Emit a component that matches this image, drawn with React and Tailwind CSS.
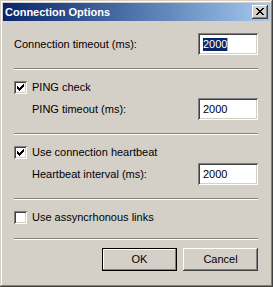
import React from 'react';

const raised =
  'shadow-[inset_-1px_-1px_0_#404040,inset_1px_1px_0_#ffffff,inset_-2px_-2px_0_#808080,inset_2px_2px_0_#d4d0c8]';
const sunken =
  'shadow-[inset_1px_1px_0_#808080,inset_-1px_-1px_0_#ffffff,inset_2px_2px_0_#404040,inset_-2px_-2px_0_#d4d0c8]';

const CloseGlyph = () => (
  <svg width="8" height="7" viewBox="0 0 8 7" shapeRendering="crispEdges" className="block">
    <path
      fill="#000"
      d="M0 0h2v1h-2z M6 0h2v1h-2z M1 1h2v1h-2z M5 1h2v1h-2z M2 2h4v1h-4z M3 3h2v1h-2z M2 4h4v1h-4z M1 5h2v1h-2z M5 5h2v1h-2z M0 6h2v1h-2z M6 6h2v1h-2z"
    />
  </svg>
);

const CheckMark = () => (
  <svg width="7" height="7" viewBox="0 0 7 7" shapeRendering="crispEdges" className="block">
    <path
      fill="#000"
      d="M6 0h1v1h-1z M5 1h2v1h-2z M0 2h1v1h-1z M4 2h3v1h-3z M0 3h2v1h-2z M3 3h3v1h-3z M0 4h5v1h-5z M1 5h3v1h-3z M2 6h1v1h-1z"
    />
  </svg>
);

const Checkbox = ({ checked, label }) => (
  <div className="flex items-center h-[13px]">
    <div className={`w-[13px] h-[13px] bg-white p-[3px] shrink-0 ${sunken}`}>
      {checked && <CheckMark />}
    </div>
    <span className="ml-[5px] leading-[13px]">{label}</span>
  </div>
);

const Field = ({ label, value, indent, selected }) => (
  <div className="flex items-center justify-between h-[22px]">
    <span className={`leading-[13px] ${indent ? 'pl-[18px]' : ''}`}>{label}</span>
    <div className={`w-[60px] h-[22px] bg-white flex items-center pl-[5px] ${sunken}`}>
      {selected ? (
        <>
          <span className="bg-[#0a246a] text-white leading-[13px]">{value}</span>
          <span className="w-px h-[13px] bg-[#d9a450]" />
        </>
      ) : (
        <span className="leading-[13px]">{value}</span>
      )}
    </div>
  </div>
);

const Separator = ({ className }) => (
  <div className={`h-[2px] border-t border-b border-t-[#808080] border-b-white ${className}`} />
);

export default function App() {
  return (
    <div
      className={`w-[273px] h-[287px] bg-[#d4d0c8] p-[3px] flex flex-col text-[11px] text-black font-['Liberation_Sans',Arial,sans-serif] shadow-[inset_-1px_-1px_0_#404040,inset_1px_1px_0_#d4d0c8,inset_-2px_-2px_0_#808080,inset_2px_2px_0_#ffffff]`}
    >
      <div className="h-[18px] bg-gradient-to-r from-[#0a246a] to-[#a6caf0] flex items-center justify-between pl-[2px] pr-[2px]">
        <span className="text-white font-bold leading-[13px]">Connection Options</span>
        <div className={`w-[16px] h-[14px] bg-[#d4d0c8] pl-[4px] pt-[3px] ${raised}`}>
          <CloseGlyph />
        </div>
      </div>

      <div className="flex-1 flex flex-col mt-[1px] pl-[11px] pr-[12px] pt-[11px]">
        <Field label="Connection timeout (ms):" value="2000" selected />
        <Separator className="mt-[13px]" />
        <div className="mt-[11px]">
          <Checkbox checked label="PING check" />
        </div>
        <div className="mt-[4px]">
          <Field label="PING timeout (ms):" value="2000" indent />
        </div>
        <Separator className="mt-[13px]" />
        <div className="mt-[11px]">
          <Checkbox checked label="Use connection heartbeat" />
        </div>
        <div className="mt-[4px]">
          <Field label="Heartbeat interval (ms):" value="2000" indent />
        </div>
        <Separator className="mt-[13px]" />
        <div className="mt-[11px]">
          <Checkbox label="Use assyncrhonous links" />
        </div>
        <Separator className="mt-[14px]" />
        <div className="mt-[8px] flex justify-end gap-[6px]">
          <button className="w-[75px] h-[23px] bg-[#d4d0c8] border border-black shadow-[inset_-1px_-1px_0_#808080,inset_1px_1px_0_#ffffff] leading-[13px]">
            OK
          </button>
          <button className={`w-[75px] h-[23px] bg-[#d4d0c8] leading-[13px] ${raised}`}>Cancel</button>
        </div>
      </div>
    </div>
  );
}
